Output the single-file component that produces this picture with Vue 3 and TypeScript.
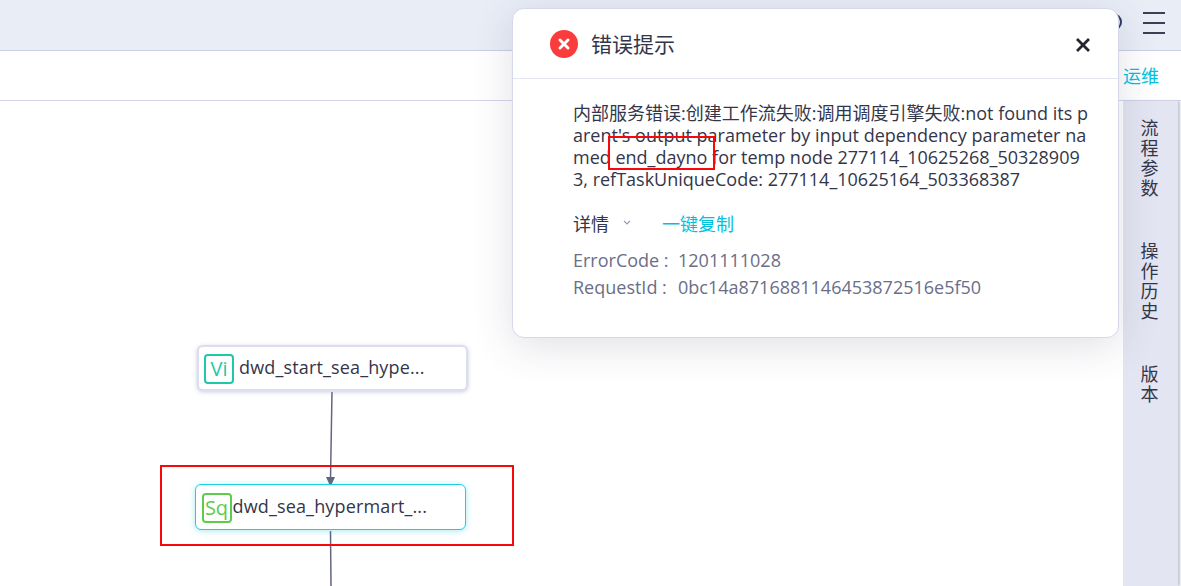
<script setup lang="ts">
const tabs: string[] = ['流程参数', '操作历史', '版本']
</script>

<template>
  <div class="page">
    <header class="topbar">
      <span class="avatar-ring"></span>
      <span class="menu"><i></i><i></i><i></i></span>
    </header>
    <div class="toolbar"><span class="ops">运维</span></div>
    <main class="body">
      <section class="canvas">
        <svg class="edges" width="1123" height="486">
          <path d="M332 291 L330.5 378" fill="none" stroke="#62667f" stroke-width="1.5" />
          <path d="M326 376 L335 376 L330.5 386 Z" fill="#62667f" />
          <path d="M330.5 430 L331 486" fill="none" stroke="#62667f" stroke-width="1.5" />
        </svg>
        <div class="node node-a">
          <span class="badge badge-vi">Vi</span>
          <span class="label">dwd_start_sea_hype...</span>
        </div>
        <div class="node node-b">
          <span class="badge badge-sq">Sq</span>
          <span class="label tight">dwd_sea_hypermart_...</span>
        </div>
        <div class="mark mark-node"></div>
      </section>
      <aside class="side">
        <div v-for="t in tabs" :key="t" class="tab">{{ t }}</div>
      </aside>
    </main>

    <div class="dialog">
      <div class="dialog-head">
        <span class="err">
          <svg width="28" height="28" viewBox="0 0 28 28">
            <circle cx="14" cy="14" r="14" fill="#fb3c3c" />
            <path d="M10 10 L18 18 M18 10 L10 18" stroke="#fff" stroke-width="3" stroke-linecap="round" />
          </svg>
        </span>
        <span class="title">错误提示</span>
        <svg class="close" width="16" height="16" viewBox="0 0 16 16">
          <path d="M2 2 L14 14 M14 2 L2 14" stroke="#24262f" stroke-width="2.8" />
        </svg>
      </div>
      <div class="dialog-body">
        <p class="msg">内部服务错误:创建工作流失败:调用调度引擎失败:not found its parent's output parameter by input dependency parameter named end_dayno for temp node 277114_10625268_503289093, refTaskUniqueCode: 277114_10625164_503368387</p>
        <div class="detail-row">
          <span class="detail">详情</span>
          <svg class="chev" width="10" height="6" viewBox="0 0 10 6">
            <path d="M2 1 L5 4 L8 1" fill="none" stroke="#9a9fb5" stroke-width="1.2" />
          </svg>
          <span class="copy">一键复制</span>
        </div>
        <div class="meta meta-first"><span class="key">ErrorCode :</span><span>1201111028</span></div>
        <div class="meta"><span class="key">RequestId :</span><span>0bc14a8716881146453872516e5f50</span></div>
      </div>
      <div class="mark mark-text"></div>
    </div>
  </div>
</template>

<style scoped>
.page {
  position: relative;
  width: 1181px;
  height: 586px;
  overflow: hidden;
  display: flex;
  flex-direction: column;
  background: #fff;
  font-family: "Open Sans", "Noto Sans CJK SC", sans-serif;
  color: #33364a;
}
.topbar {
  height: 50px;
  flex: none;
  box-sizing: content-box;
  background: #e9edf6;
  border-bottom: 1px solid #c9cfe6;
  display: flex;
  justify-content: flex-end;
  align-items: flex-start;
  padding-right: 16px;
}
.avatar-ring {
  width: 18px;
  height: 18px;
  margin: 13px 21px 0 0;
  border-radius: 50%;
  border: 2px solid #2d3a66;
  box-sizing: border-box;
}
.menu {
  display: flex;
  flex-direction: column;
  gap: 8px;
  margin-top: 12px;
  width: 22px;
}
.menu i {
  display: block;
  height: 2px;
  background: #3c3f55;
}
.toolbar {
  height: 49px;
  flex: none;
  background: #fff;
  border-bottom: 1px solid #d3d6ea;
  display: flex;
  justify-content: flex-end;
  align-items: center;
  padding-right: 22px;
}
.ops {
  font-size: 18px;
  color: #00c1de;
  margin-bottom: 1px;
}
.body {
  flex: 1;
  display: flex;
  min-height: 0;
}
.canvas {
  position: relative;
  flex: 1;
}
.edges {
  position: absolute;
  left: 0;
  top: 0;
}
.side {
  width: 55px;
  margin-right: 3px;
  flex: none;
  background: #e3e5f2;
  box-shadow: 2px 0 2px #c4c6d2;
  display: flex;
  flex-direction: column;
  align-items: center;
  gap: 43px;
  padding-top: 17px;
}
.tab {
  width: 18px;
  font-size: 18px;
  line-height: 20px;
  text-align: center;
  color: #33364a;
  margin-right: 2px;
}
.node {
  position: absolute;
  box-sizing: border-box;
  width: 271px;
  height: 46px;
  background: #fff;
  border-radius: 6px;
  display: flex;
  align-items: center;
}
.node-a {
  left: 197px;
  top: 244px;
  border: 2px solid #dcdeee;
  box-shadow: 0 1px 4px rgba(150, 155, 190, 0.5);
  padding-left: 5px;
}
.node-b {
  left: 195px;
  top: 383px;
  border: 1.5px solid #1ccfe0;
  box-shadow: 0 1px 6px rgba(40, 205, 225, 0.4);
  padding-left: 5.5px;
}
.badge {
  box-sizing: border-box;
  width: 30px;
  height: 30px;
  border-radius: 4px;
  border: 2px solid;
  display: flex;
  align-items: center;
  justify-content: center;
  font-size: 20px;
  flex: none;
  margin-top: 1px;
}
.badge-vi {
  color: #1fc8a8;
  border-color: #1fc8a8;
}
.badge-sq {
  color: #5fcb4a;
  border-color: #5fcb4a;
}
.label {
  margin-left: 5px;
  margin-bottom: 3px;
  font-size: 18px;
  letter-spacing: 0.15px;
  color: #33364a;
  white-space: nowrap;
}
.label.tight {
  margin-left: 1px;
}
.mark {
  position: absolute;
  box-sizing: border-box;
  border: 2px solid #f80808;
  pointer-events: none;
}
.mark-node {
  left: 160px;
  top: 364px;
  width: 354px;
  height: 81px;
}
.dialog {
  position: absolute;
  left: 512px;
  top: 8px;
  width: 607px;
  height: 330px;
  box-sizing: border-box;
  background: #fff;
  border: 1px solid #d5d8ea;
  border-radius: 12px;
  box-shadow: 0 8px 40px rgba(60, 65, 100, 0.16);
}
.dialog-head {
  height: 69px;
  display: flex;
  align-items: center;
  padding: 0 27px 0 37px;
  border-bottom: 1px solid #e3e5f0;
}
.err {
  display: flex;
  margin-right: 13px;
}
.title {
  flex: 1;
  font-size: 21px;
  color: #33364a;
  margin-bottom: 2px;
}
.close {
  margin-top: 3px;
}
.dialog-body {
  padding: 23px 29px 0 60px;
}
.msg {
  margin: 0;
  font-size: 18px;
  line-height: 22px;
  color: #33364a;
  word-break: break-all;
}
.detail-row {
  margin-top: 21px;
  display: flex;
  align-items: center;
  height: 24px;
  font-size: 18px;
}
.chev {
  margin-left: 13px;
}
.copy {
  margin-left: 30px;
  color: #00c1de;
}
.meta {
  font-size: 18px;
  line-height: 27px;
  color: #6a6e88;
  display: flex;
}
.meta-first {
  margin-top: 12px;
}
.key {
  width: 105px;
  flex: none;
}
.mark-text {
  left: 95px;
  top: 127px;
  width: 107px;
  height: 34px;
}
</style>
